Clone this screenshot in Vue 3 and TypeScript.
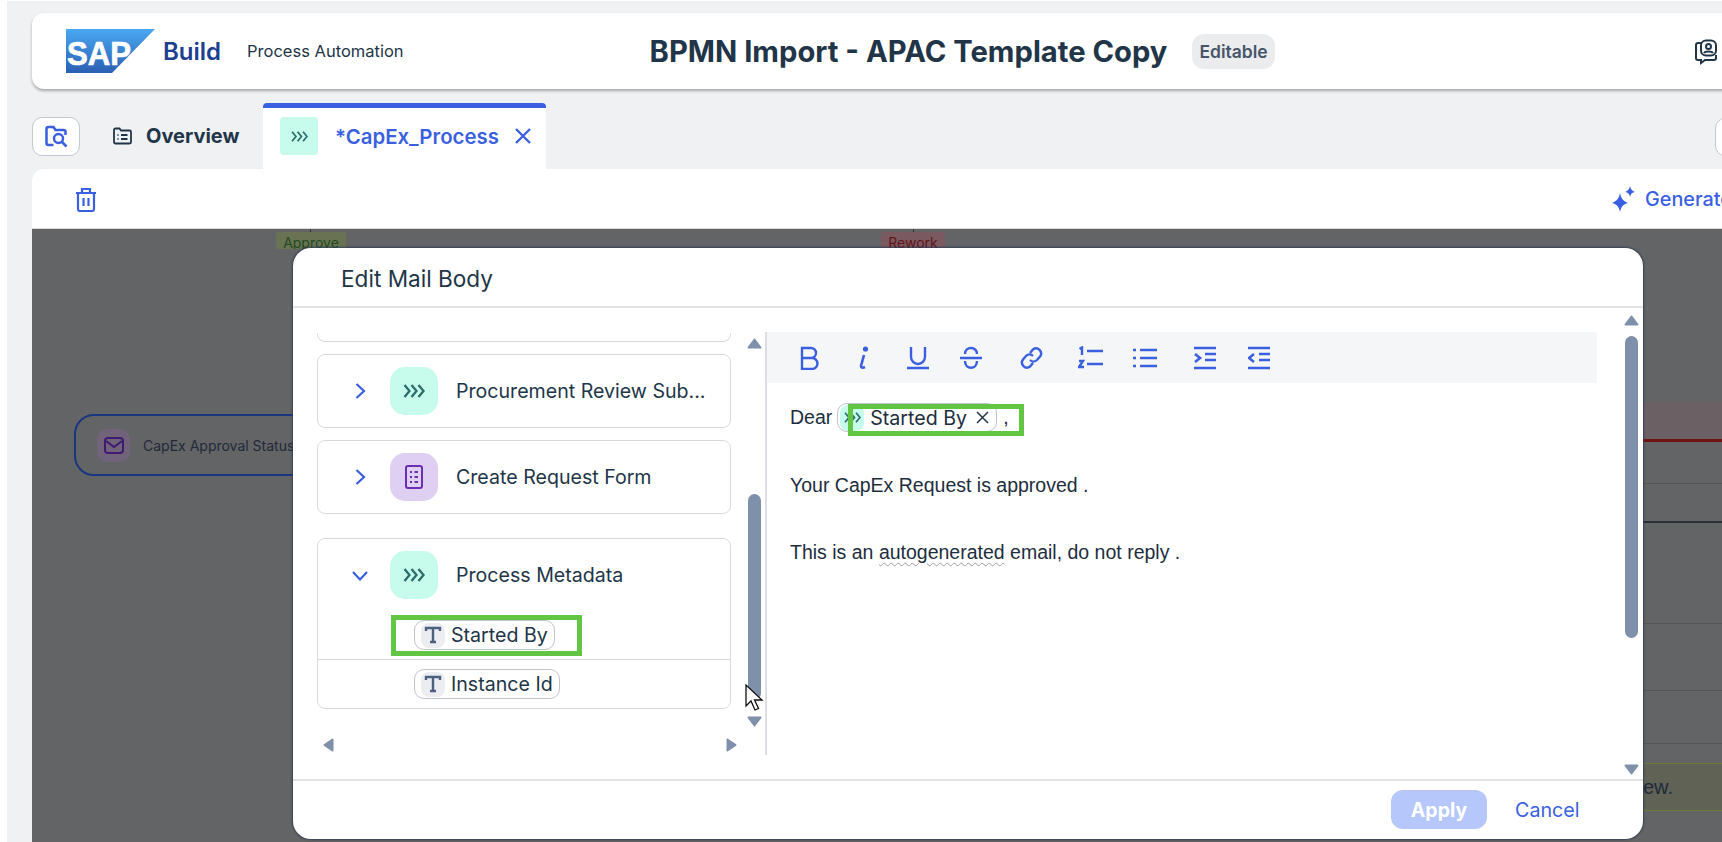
<script setup lang="ts">
const chevrons = 'M1 1l5 6-5 6M8 1l5 6-5 6M15 1l5 6-5 6'
</script>

<template>
  <div class="page">
    <header class="topbar">
      <svg class="logo" width="89" height="44" viewBox="0 0 89 44">
        <defs>
          <linearGradient id="sapg" x1="0" y1="0" x2="0" y2="1">
            <stop offset="0" stop-color="#4ba8f2" />
            <stop offset="1" stop-color="#2a5fb3" />
          </linearGradient>
        </defs>
        <polygon points="0,0 89,0 46,44 0,44" fill="url(#sapg)" />
        <text x="1" y="36" class="logotext" textLength="64" lengthAdjust="spacingAndGlyphs">SAP</text>
      </svg>
      <span class="build">Build</span>
      <span class="product">Process Automation</span>
      <h1 class="title">BPMN Import - APAC Template Copy</h1>
      <span class="editable">Editable</span>
      <svg class="feedback" width="24" height="26" viewBox="0 0 24 26" fill="none" stroke="#223548" stroke-width="2">
        <path d="M7 4H4a2 2 0 0 0-2 2v13a2 2 0 0 0 2 2h3v3l4-3h9a2 2 0 0 0 2-2v-3" />
        <rect x="7" y="1.500" width="15" height="15" rx="5" />
        <circle cx="14.500" cy="7.500" r="2.500" />
        <path d="M10 14c1-2 8-2 9 0" />
      </svg>
    </header>

    <nav class="tabs">
      <button class="searchbtn">
        <svg width="25" height="23" viewBox="0 0 24 23" fill="none" stroke="#3a5fe0" stroke-width="2.500">
          <path d="M9 20H4a2 2 0 0 1-2-2V4a2 2 0 0 1 2-2h5l2 3h8a2 2 0 0 1 2 2v3" />
          <circle cx="14" cy="13.500" r="4.500" />
          <path d="M17.500 17L22 21.500" />
        </svg>
      </button>
      <div class="tab">
        <svg width="19" height="18" viewBox="0 0 19 18" fill="none" stroke="#223548" stroke-width="1.800">
          <path d="M1 4V3a1.500 1.500 0 0 1 1.500-1.500h4L8 3.500h8.500A1.500 1.500 0 0 1 18 5v10a1.500 1.500 0 0 1-1.500 1.500h-14A1.500 1.500 0 0 1 1 15z" />
          <path d="M4.500 8h1M8 8h6.500M4.500 12h1M8 12h6.500" />
        </svg>
        <span>Overview</span>
      </div>
      <div class="tab-active">
        <span class="tabicon">
          <svg width="17" height="11" viewBox="0 0 21 14" fill="none" stroke="#2c6e6a" stroke-width="2.200"><path :d="chevrons" /></svg>
        </span>
        <span class="tabname">*CapEx_Process</span>
        <svg class="tabclose" width="16" height="16" viewBox="0 0 16 16" fill="none" stroke="#3a5fe0" stroke-width="2.400"><path d="M1 1l14 14M15 1L1 15" /></svg>
      </div>
      <button class="edgebtn"></button>
    </nav>

    <main class="content">
      <div class="actions">
        <svg class="trash" width="22" height="25" viewBox="0 0 22 25" fill="none" stroke="#3a5fe0" stroke-width="2.200">
          <path d="M1 6h20M7 6V2h8v4M3 6v16a2 2 0 0 0 2 2h12a2 2 0 0 0 2-2V6M8.500 11v8M13.500 11v8" />
        </svg>
        <div class="generate">
          <svg width="26" height="26" viewBox="0 0 26 26" fill="#3a5fe0">
            <path d="M9 7c1 5 3 8 8 10-5 1-7 4-8 9-1-5-3-8-8-9 5-2 7-5 8-10z" />
            <path d="M19 0c.5 3 2 5 5 6-3 .5-4.500 2-5 5-.5-3-2-4.500-5-5 3-1 4.500-3 5-6z" />
          </svg>
          <span>Generate</span>
        </div>
      </div>

      <section class="canvas">
        <span class="flag flag-green">Approve</span>
        <span class="flag flag-red">Rework</span>
        <i class="stem stem1"></i>
        <i class="stem stem2"></i>
        <div class="node">
          <span class="nodeicon">
            <svg width="20" height="17" viewBox="0 0 20 17" fill="none" stroke="#3f1a73" stroke-width="2">
              <rect x="1" y="1" width="18" height="15" rx="3" />
              <path d="M2 4l8 6 8-6" />
            </svg>
          </span>
          <span>CapEx Approval Status</span>
        </div>
        <div class="band band-red"></div>
        <i class="rule r1"></i>
        <i class="rule r2"></i>
        <i class="rule r3"></i>
        <i class="rule r4"></i>
        <i class="rule r5"></i>
        <div class="band band-green">ew.</div>

        <div class="modal">
          <div class="modal-head">Edit Mail Body</div>
          <div class="modal-body">
            <div class="pane">
              <div class="tree">
                <div class="card card-cut"></div>
                <div class="card row">
                  <svg class="chev" width="11" height="16" viewBox="0 0 11 16" fill="none" stroke="#3a5fe0" stroke-width="2.200"><path d="M1.500 1l7.500 7-7.500 7" /></svg>
                  <span class="bubble mint"><svg width="22" height="14" viewBox="0 0 21 14" fill="none" stroke="#2c6e6a" stroke-width="2.300"><path :d="chevrons" /></svg></span>
                  <span class="rowtext">Procurement Review Sub...</span>
                </div>
                <div class="card row">
                  <svg class="chev" width="11" height="16" viewBox="0 0 11 16" fill="none" stroke="#3a5fe0" stroke-width="2.200"><path d="M1.500 1l7.500 7-7.500 7" /></svg>
                  <span class="bubble lilac">
                    <svg width="18" height="24" viewBox="0 0 18 24" fill="none" stroke="#6a2fb0" stroke-width="2">
                      <rect x="1" y="1" width="16" height="22" rx="2" />
                      <path d="M5 7h2M9.500 7h3.500M5 12h2M9.500 12h3.500M5 17h2M9.500 17h3.500" />
                    </svg>
                  </span>
                  <span class="rowtext">Create Request Form</span>
                </div>
                <div class="card card-open">
                  <div class="row row-open">
                    <svg class="chev chev-down" width="16" height="11" viewBox="0 0 16 11" fill="none" stroke="#3a5fe0" stroke-width="2.200"><path d="M1 2l7 7.500L15 2" /></svg>
                    <span class="bubble mint"><svg width="22" height="14" viewBox="0 0 21 14" fill="none" stroke="#2c6e6a" stroke-width="2.300"><path :d="chevrons" /></svg></span>
                    <span class="rowtext">Process Metadata</span>
                  </div>
                  <div class="field field-first">
                    <span class="chip">
                      <span class="tbub"><svg width="18" height="18" viewBox="0 0 18 18" fill="none" stroke="#4d6080" stroke-width="2.400"><path d="M2 5V2h14v3M9 2v14M6 16h6" /></svg></span>
                      Started By
                    </span>
                    <i class="mark mark-left"></i>
                  </div>
                  <div class="field">
                    <span class="chip">
                      <span class="tbub"><svg width="18" height="18" viewBox="0 0 18 18" fill="none" stroke="#4d6080" stroke-width="2.400"><path d="M2 5V2h14v3M9 2v14M6 16h6" /></svg></span>
                      Instance Id
                    </span>
                  </div>
                </div>
              </div>
              <div class="vbar">
                <svg width="15" height="11" viewBox="0 0 15 11" class="arrow"><polygon points="7.500,1.500 13.500,9.500 1.500,9.500" /></svg>
                <i class="thumb"></i>
                <svg width="15" height="11" viewBox="0 0 15 11" class="arrow down"><polygon points="7.500,9.500 13.500,1.500 1.500,1.500" /></svg>
              </div>
              <div class="hbar">
                <svg width="11" height="14" viewBox="0 0 11 14" class="arrow"><polygon points="1.500,7 9.500,1.500 9.500,12.500" /></svg>
                <svg width="11" height="14" viewBox="0 0 11 14" class="arrow"><polygon points="9.500,7 1.500,1.500 1.500,12.500" /></svg>
              </div>
            </div>

            <div class="editor">
              <div class="rte">
                <svg width="20" height="24" viewBox="0 0 20 24" fill="none" stroke="#3a5fe0" stroke-width="2.400"><path d="M2 2h9a5 5 0 0 1 0 10H2zM2 12h10a5.500 5.500 0 0 1 0 11H2z" /></svg>
                <svg class="gi" width="12" height="24" viewBox="0 0 12 24" fill="none" stroke="#3a5fe0" stroke-width="2.600"><path d="M7 9L4 20c0 2 2 2 4 1" /><circle cx="8.500" cy="3" r="1.300" fill="#3a5fe0" /></svg>
                <svg class="gu" width="22" height="24" viewBox="0 0 22 24" fill="none" stroke="#3a5fe0" stroke-width="2.400"><path d="M4 1v10a7 7 0 0 0 14 0V1M0 22h22" /></svg>
                <svg class="gs" width="22" height="24" viewBox="0 0 22 24" fill="none" stroke="#3a5fe0" stroke-width="2.400"><path d="M17 8c0-8-12-8-12 0M0 12h22M5 15c0 9 12 9 12 0" /></svg>
                <svg class="gl" width="23" height="24" viewBox="0 0 23 24" fill="none" stroke="#3a5fe0" stroke-width="2.400"><path d="M10 7l3-3.500a5 5 0 0 1 7 7L17 14a5 5 0 0 1-7 0M13 17l-3 3.500a5 5 0 0 1-7-7L6 10a5 5 0 0 1 7 0" /></svg>
                <svg class="go" width="25" height="24" viewBox="0 0 25 24" fill="none" stroke="#3a5fe0" stroke-width="2.400"><path d="M1.500 3L4 1.500V9M9 5h16M1 15h4l-4 6h5M9 18h16" /></svg>
                <svg class="gb" width="24" height="24" viewBox="0 0 24 24" fill="none" stroke="#3a5fe0" stroke-width="2.400"><path d="M0 4h3M7 4h17M0 12h3M7 12h17M0 20h3M7 20h17" /></svg>
                <svg class="gin" width="22" height="24" viewBox="0 0 22 24" fill="none" stroke="#3a5fe0" stroke-width="2.400"><path d="M0 2h22M11 8h11M11 14h11M0 22h22" /><path d="M1 8l5 4-5 4" stroke-width="2.600" /></svg>
                <svg class="gout" width="22" height="24" viewBox="0 0 22 24" fill="none" stroke="#3a5fe0" stroke-width="2.400"><path d="M0 2h22M11 8h11M11 14h11M0 22h22" /><path d="M6 8l-5 4 5 4" stroke-width="2.600" /></svg>
              </div>
              <div class="mail">
                <p class="line first">
                  Dear
                  <span class="token">
                    <span class="tokicon"><svg width="17" height="11" viewBox="0 0 21 14" fill="none" stroke="#2c6e6a" stroke-width="2.200"><path :d="chevrons" /></svg></span>
                    <span class="toktext">Started By</span>
                    <svg width="13" height="13" viewBox="0 0 13 13" fill="none" stroke="#223548" stroke-width="1.500"><path d="M1 1l11 11M12 1L1 12" /></svg>
                  </span>
                  <span class="comma">,</span>
                  <i class="mark mark-right"></i>
                </p>
                <p class="line">Your CapEx Request is approved .</p>
                <p class="line">This is an <span class="wavy">autogenerated</span> email, do not reply .</p>
              </div>
            </div>

            <div class="vbar2">
              <svg width="15" height="11" viewBox="0 0 15 11" class="arrow"><polygon points="7.500,1.500 13.500,9.500 1.500,9.500" /></svg>
              <i class="thumb2"></i>
              <svg width="15" height="11" viewBox="0 0 15 11" class="arrow low"><polygon points="7.500,9.500 13.500,1.500 1.500,1.500" /></svg>
            </div>
          </div>
          <div class="modal-foot">
            <button class="apply">Apply</button>
            <button class="cancel">Cancel</button>
          </div>
        </div>

        <svg class="cursor" width="19" height="28" viewBox="0 0 19 28">
          <path d="M1 1v21l5-5 4 9 3.500-1.500-4-8.500H17z" fill="#fff" stroke="#111" stroke-width="1.300" />
        </svg>
      </section>
    </main>
  </div>
</template>

<style scoped>
.page {
  box-sizing: border-box;
  width: 1715px;
  height: 841px;
  margin: 1px 0 0 7px;
  padding: 12px 0 0 25px;
  background: #eff1f2;
  overflow: hidden;
  font-family: Inter, "Noto Sans", sans-serif;
  color: #223548;
}
.topbar {
  display: flex;
  align-items: center;
  height: 76px;
  width: 1710px;
  padding-left: 34px;
  box-sizing: border-box;
  background: #fff;
  border-radius: 12px;
  box-shadow: 0 2px 3px rgba(0, 0, 0, 0.3);
}
.logo { flex: none; }
.logotext {
  font: 700 33px "Liberation Sans", sans-serif;
  fill: #fff;
  stroke: #fff;
  stroke-width: 0.7px;
}
.build {
  margin-left: 8px;
  font-size: 24px;
  font-weight: 600;
  color: #1d3f8f;
}
.product {
  margin-left: 26px;
  font-size: 16.500px;
  color: #223548;
  white-space: nowrap;
}
.title {
  margin: 0 0 0 246px;
  font-size: 29.200px;
  font-weight: 700;
  white-space: nowrap;
}
.editable {
  margin-left: 25px;
  padding: 0 7px;
  height: 35px;
  line-height: 35px;
  border-radius: 12px;
  background: #ebecee;
  color: #475569;
  font-size: 17.500px;
  font-weight: 600;
  white-space: nowrap;
}
.feedback {
  position: absolute;
  left: 1694px;
  top: 39px;
}
.tabs {
  display: flex;
  align-items: flex-start;
  height: 80px;
  padding-top: 14px;
  box-sizing: border-box;
}
.searchbtn {
  flex: none;
  display: flex;
  align-items: center;
  justify-content: center;
  box-sizing: border-box;
  width: 48px;
  height: 39px;
  margin-top: 14px;
  padding: 0;
  background: #fff;
  border: 1px solid #c3c9d0;
  border-radius: 10px;
}
.tab {
  flex: none;
  display: flex;
  align-items: center;
  gap: 14px;
  width: 183px;
  height: 66px;
  padding-left: 33px;
  box-sizing: border-box;
  font-size: 20px;
  font-weight: 700;
}
.tab-active {
  flex: none;
  display: flex;
  align-items: center;
  box-sizing: border-box;
  width: 283px;
  height: 66px;
  padding: 0 0 5px 17px;
  background: #fff;
  border-top: 5px solid #3a5fe0;
  border-radius: 4px 4px 0 0;
}
.tabicon {
  display: flex;
  align-items: center;
  justify-content: center;
  width: 38px;
  height: 38px;
  border-radius: 4px;
  background: #c7fbeb;
}
.tabname {
  margin-left: 17px;
  font-size: 20.400px;
  font-weight: 600;
  color: #3a5fe0;
  white-space: nowrap;
}
.tabclose { margin-left: 16px; flex: none; }
.edgebtn {
  flex: none;
  width: 40px;
  height: 38px;
  margin: 15px 0 0 1169px;
  background: #fff;
  border: 1px solid #c3c9d0;
  border-radius: 10px;
}
.content {
  width: 1700px;
  height: 673px;
  display: flex;
  flex-direction: column;
}
.actions {
  position: relative;
  flex: none;
  height: 60px;
  background: #fff;
  border-radius: 12px 0 0 0;
  border-bottom: 1px solid #d9d9d9;
  box-sizing: border-box;
}
.trash {
  position: absolute;
  left: 43px;
  top: 18px;
}
.generate {
  position: absolute;
  left: 1579px;
  top: 17px;
  display: flex;
  align-items: center;
  gap: 8px;
  font-size: 19.800px;
  font-weight: 500;
  color: #3a5fe0;
}
.canvas {
  position: relative;
  flex: 1;
  background: #636465;
  overflow: hidden;
}
.flag {
  position: absolute;
  top: 3px;
  height: 17px;
  line-height: 22px;
  text-align: center;
  font-size: 14px;
  border-radius: 3px;
  overflow: hidden;
}
.flag-green { left: 244px; width: 70px; background: #697354; color: #1f4a22; }
.flag-red { left: 849px; width: 64px; background: #7a5a60; color: #611518; }
.stem { position: absolute; top: 0; width: 1px; height: 3px; background: #333; }
.stem1 { left: 278px; }
.stem2 { left: 881px; }
.node {
  position: absolute;
  left: 42px;
  top: 185px;
  box-sizing: border-box;
  width: 300px;
  height: 62px;
  display: flex;
  align-items: center;
  gap: 13px;
  padding-left: 21px;
  border: 2.500px solid #1a3680;
  border-radius: 20px;
  font-size: 14px;
  color: #1f2a3a;
  white-space: nowrap;
}
.nodeicon {
  display: flex;
  align-items: center;
  justify-content: center;
  width: 33px;
  height: 33px;
  border-radius: 10px;
  background: #70637a;
}
.band {
  position: absolute;
  left: 1611px;
  width: 120px;
}
.band-red {
  top: 173px;
  height: 37px;
  background: #6b6064;
  border-bottom: 3px solid #701212;
}
.band-green {
  top: 534px;
  height: 46px;
  padding-left: 0;
  background: #606256;
  border-top: 1px solid #6f7a3a;
  border-bottom: 1px solid #6f7a3a;
  font: 20px "Liberation Sans", sans-serif;
  line-height: 46px;
  color: #1f2a3a;
}
.rule {
  position: absolute;
  left: 1611px;
  width: 120px;
  height: 1px;
  background: #555658;
}
.r1 { top: 254px; }
.r2 { top: 292px; height: 2px; background: #2b2f38; }
.r3 { top: 394px; }
.r4 { top: 461px; }
.r5 { top: 514px; }
.modal {
  position: absolute;
  left: 261px;
  top: 19px;
  width: 1350px;
  height: 591px;
  display: flex;
  flex-direction: column;
  background: #fff;
  border-radius: 18px;
  box-shadow: 0 0 2px 1px rgba(45, 60, 85, 0.85);
}
.modal-head {
  flex: none;
  box-sizing: border-box;
  height: 60px;
  padding: 2px 0 0 48px;
  display: flex;
  align-items: center;
  border-bottom: 2px solid #dfe1e3;
  font-size: 22.600px;
}
.modal-body {
  flex: 1;
  position: relative;
  display: flex;
  align-items: flex-start;
  padding: 24px 0 0 24px;
  min-height: 0;
}
.pane {
  flex: none;
  box-sizing: border-box;
  width: 450px;
  height: 423px;
  display: grid;
  grid-template-columns: 414px 15px;
  grid-template-rows: 395px 28px;
  column-gap: 16px;
  border-right: 2px solid #dcdee1;
}
.tree {
  display: flex;
  flex-direction: column;
  gap: 12px;
  overflow: hidden;
  padding-top: 1px;
}
.card {
  flex: none;
  box-sizing: border-box;
  width: 414px;
  background: #fff;
  border: 1px solid #d9dadc;
  border-radius: 8px;
}
.card-cut {
  height: 9px;
  border-top: 0;
  border-radius: 0 0 8px 8px;
}
.row {
  display: flex;
  align-items: center;
  height: 74px;
}
.row-open { height: 72px; }
.chev {
  flex: none;
  margin-left: 37px;
}
.chev-down { margin-left: 34px; }
.bubble {
  flex: none;
  display: flex;
  align-items: center;
  justify-content: center;
  width: 48px;
  height: 48px;
  margin-left: 24px;
  border-radius: 15px;
}
.chev-down + .bubble { margin-left: 22px; }
.mint { background: #c7fbeb; }
.lilac { background: #dfcff2; }
.rowtext {
  margin-left: 18px;
  font-size: 19.600px;
  white-space: nowrap;
}
.card-open { height: 171px; margin-top: 12px; }
.field {
  position: relative;
  box-sizing: border-box;
  height: 49px;
  padding: 9px 0 0 96px;
}
.field-first {
  height: 49px;
  padding-top: 9px;
  border-bottom: 1px solid #d9dadc;
}
.chip {
  display: inline-flex;
  align-items: center;
  gap: 6px;
  box-sizing: border-box;
  height: 30px;
  padding: 0 6px 0 6px;
  border: 1px solid #bfc3cc;
  border-radius: 10px;
  font-size: 19.600px;
  white-space: nowrap;
}
.tbub {
  display: flex;
  align-items: center;
  justify-content: center;
  width: 24px;
  height: 25px;
  border-radius: 8px;
  background: #ebedf0;
}
.mark {
  position: absolute;
  box-sizing: border-box;
  border: 5px solid #62c544;
  pointer-events: none;
}
.mark-left {
  left: 73px;
  top: 4px;
  width: 191px;
  height: 41px;
}
.arrow {
  flex: none;
  display: block;
  fill: #7f90ab;
  stroke: #7f90ab;
  stroke-width: 2px;
  stroke-linejoin: round;
}
.arrow.down { margin-top: 16px; }
.arrow.low { margin-top: 126px; }
.vbar {
  grid-row: 1 / span 2;
  grid-column: 2;
  display: flex;
  flex-direction: column;
  align-items: center;
  padding-top: 6px;
}
.thumb {
  display: block;
  flex: none;
  width: 13px;
  height: 206px;
  margin-top: 145px;
  border-radius: 7px;
  background: #7f90ab;
}
.hbar {
  grid-column: 1;
  grid-row: 2;
  display: flex;
  justify-content: space-between;
  align-items: flex-start;
  margin-right: -6px;
  padding: 11px 0 0 6px;
}
.editor {
  flex: none;
  width: 830px;
}
.rte {
  box-sizing: border-box;
  height: 51px;
  padding-left: 33px;
  display: flex;
  align-items: center;
  background: #f5f6f8;
}
.gi { margin-left: 37px; }
.gu { margin-left: 38px; }
.gs { margin-left: 31px; }
.gl { margin-left: 38px; }
.go { margin-left: 35px; }
.gb { margin-left: 30px; }
.gin { margin-left: 37px; }
.gout { margin-left: 32px; }
.mail {
  padding: 1px 0 0 23px;
  font: 19.500px "Liberation Sans", sans-serif;
  color: #1d2d3e;
}
.line {
  position: relative;
  margin: 0;
  height: 67px;
  line-height: 69px;
  white-space: nowrap;
}
.line.first {
  display: flex;
  align-items: center;
  gap: 5px;
}
.token {
  position: relative;
  display: inline-flex;
  align-items: center;
  box-sizing: border-box;
  height: 29px;
  width: 160px;
  padding-left: 2px;
  border: 1px solid #bfc3cc;
  border-radius: 10px;
  line-height: 1;
}
.tokicon {
  display: flex;
  align-items: center;
  justify-content: center;
  width: 24px;
  height: 26px;
  border-radius: 8px;
  background: #c7fbeb;
  overflow: hidden;
}
.toktext {
  margin-left: 6px;
  margin-right: 9px;
  font: 19.600px Inter, sans-serif;
}
.comma { margin-left: 1px; }
.mark-right {
  left: 58px;
  top: 20px;
  width: 176px;
  height: 32px;
}
.wavy {
  text-decoration: underline wavy #9a9da3 1px;
  text-underline-offset: 3px;
}
.vbar2 {
  position: absolute;
  left: 1331px;
  top: 7px;
  width: 15px;
  display: flex;
  flex-direction: column;
  align-items: center;
}
.thumb2 {
  display: block;
  width: 13px;
  height: 302px;
  margin-top: 10px;
  border-radius: 7px;
  background: #7f90ab;
}
.modal-foot {
  flex: none;
  box-sizing: border-box;
  height: 60px;
  border-top: 2px solid #dfe1e3;
  display: flex;
  align-items: flex-start;
  padding: 9px 0 0 1098px;
}
.apply {
  width: 96px;
  height: 39px;
  padding: 0;
  border: 0;
  border-radius: 12px;
  background: #b5c7fb;
  color: #fff;
  font: 700 19.500px Inter, sans-serif;
}
.cancel {
  height: 39px;
  margin-left: 28px;
  padding: 0;
  border: 0;
  background: transparent;
  color: #3a5fe0;
  font: 400 19.700px Inter, sans-serif;
}
.cursor {
  position: absolute;
  left: 713px;
  top: 455px;
}
</style>

<style>
html, body { margin: 0; background: #fff; overflow: hidden; }
</style>
